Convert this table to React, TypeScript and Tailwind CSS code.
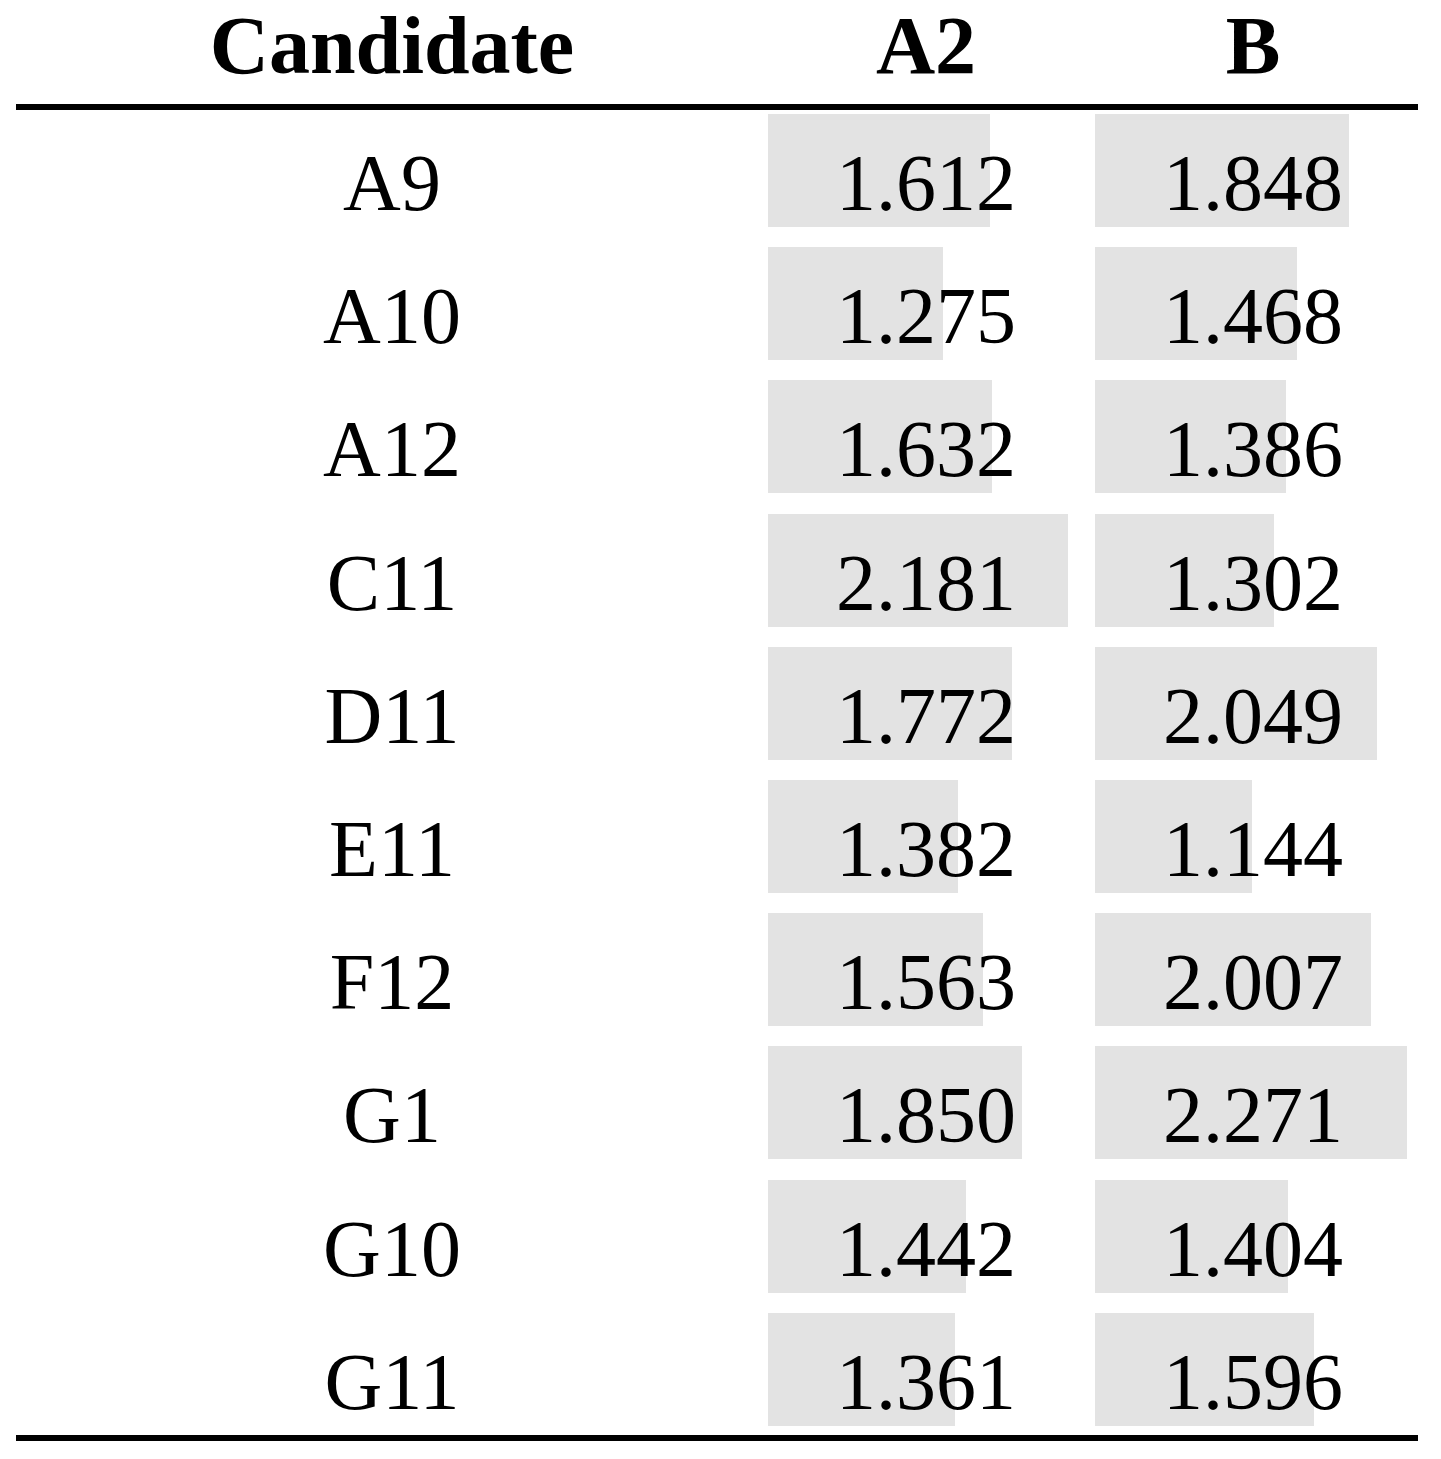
import React from 'react';

interface Row {
  name: string;
  a2: number;
  b: number;
}

const rows: Row[] = [
  { name: 'A9', a2: 1.612, b: 1.848 },
  { name: 'A10', a2: 1.275, b: 1.468 },
  { name: 'A12', a2: 1.632, b: 1.386 },
  { name: 'C11', a2: 2.181, b: 1.302 },
  { name: 'D11', a2: 1.772, b: 2.049 },
  { name: 'E11', a2: 1.382, b: 1.144 },
  { name: 'F12', a2: 1.563, b: 2.007 },
  { name: 'G1', a2: 1.85, b: 2.271 },
  { name: 'G10', a2: 1.442, b: 1.404 },
  { name: 'G11', a2: 1.361, b: 1.596 },
];

// px per unit for the shaded bars
const SCALE = 137.5;

const BarCell: React.FC<{ value: number }> = ({ value }) => (
  <div className="grid h-[113px]">
    <div
      className="[grid-area:1/1] h-[113px] bg-[#e3e3e3]"
      style={{ width: `${value * SCALE}px` }}
    />
    <div className="[grid-area:1/1] z-10 self-end w-[316px] pb-[4px] text-center leading-none">
      {value.toFixed(3)}
    </div>
  </div>
);

export default function App() {
  return (
    <div className="w-[1441px] h-[1459px] bg-white text-black font-['Liberation_Serif',serif]">
      <div className="ml-[16px] w-[1402px]">
        {/* header */}
        <div className="grid grid-cols-[752px_327px_323px] h-[110px] border-b-[6px] border-black text-[82px] font-bold leading-none">
          <div className="self-end pb-[17px] text-center">Candidate</div>
          <div className="self-end pb-[17px] w-[316px] text-center">A2</div>
          <div className="self-end pb-[17px] w-[316px] text-center">B</div>
        </div>

        {/* body */}
        <div className="flex flex-col gap-y-[20.2px] pt-[4px] pb-[9px] border-b-[6px] border-black text-[80px]">
          {rows.map((r) => (
            <div key={r.name} className="grid grid-cols-[752px_327px_323px] h-[113px]">
              <div className="self-end pb-[4px] text-center leading-none">{r.name}</div>
              <BarCell value={r.a2} />
              <BarCell value={r.b} />
            </div>
          ))}
        </div>
      </div>
    </div>
  );
}
